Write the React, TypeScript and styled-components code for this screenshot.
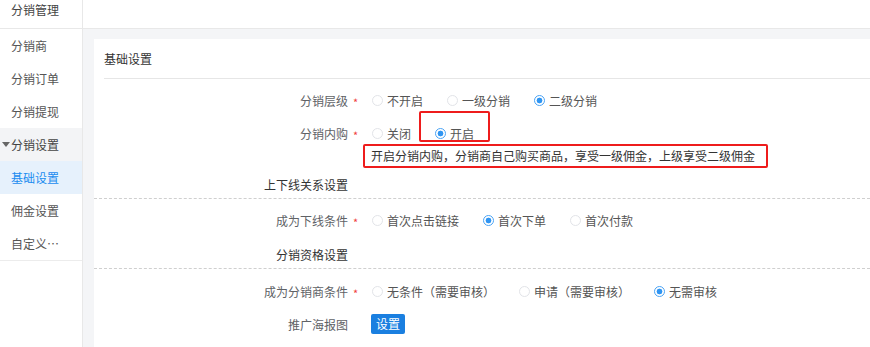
import * as React from 'react';
import styled, { createGlobalStyle, css } from 'styled-components';

const GlobalStyle = createGlobalStyle`
  html, body {
    margin: 0;
    padding: 0;
    background: #ffffff;
  }
  body {
    font-family: "Noto Sans CJK SC", "Noto Sans", sans-serif;
    font-size: 12px;
    color: #555;
  }
`;

// Layout
const Page = styled.div`
  display: flex;
  height: 347px;
  overflow: hidden;
`;

const Sidebar = styled.aside`
  width: 82px;
  flex-shrink: 0;
  border-right: 1px solid #e8e8e8;
  background: #fff;
`;

const SideHeader = styled.div`
  height: 28px;
  line-height: 19px;
  padding-left: 11px;
  color: #444;
  border-bottom: 1px solid #e8e8e8;
`;

const SideList = styled.ul`
  list-style: none;
  margin: 0;
  padding: 0;
  border-bottom: 1px solid #ececec;
`;

const SideItem = styled.li<{ $active?: boolean; $group?: boolean }>`
  display: flex;
  align-items: center;
  height: 33px;
  padding-left: 11px;
  color: #555;
  white-space: nowrap;
  ${(p) =>
    p.$group &&
    css`
      padding-left: 2px;
      background: #f3f4f6;
      color: #444;
    `}
  ${(p) =>
    p.$active &&
    css`
      background: #e6f1fc;
      color: #1a8cf0;
    `}
`;

const Caret = styled.span`
  width: 0;
  height: 0;
  border-left: 4px solid transparent;
  border-right: 4px solid transparent;
  border-top: 5px solid #666;
  margin-right: 1px;
`;

const Main = styled.main`
  flex: 1;
  display: flex;
  flex-direction: column;
  min-width: 0;
`;

const TopBar = styled.div`
  height: 28px;
  background: #fff;
  border-bottom: 1px solid #e8e8e8;
`;

const Content = styled.div`
  flex: 1;
  background: #f4f5f7;
  padding: 10px 0 0 11px;
`;

const Card = styled.section`
  background: #fff;
  height: 100%;
`;

const CardTitle = styled.div`
  margin-left: 10px;
  height: 39px;
  line-height: 39px;
  color: #333;
  border-bottom: 1px solid #e6e6e6;
`;

const Form = styled.div`
  padding-top: 11px;
`;

const Row = styled.div<{ $top?: number }>`
  display: flex;
  align-items: center;
  height: 20px;
  margin-top: ${(p) => p.$top ?? 0}px;
`;

const Label = styled.div`
  width: 268px;
  flex-shrink: 0;
  display: flex;
  justify-content: flex-end;
  align-items: center;
  color: #606266;
`;

const Star = styled.span`
  width: 14px;
  padding: 3px 0 0 5px;
  box-sizing: border-box;
  color: #f04040;
  font-size: 11px;
`;

const Group = styled.div`
  display: flex;
  align-items: center;
  padding-left: 10px;
`;

const Option = styled.label<{ $mark?: boolean }>`
  position: relative;
  display: flex;
  align-items: center;
  margin-right: 24px;
  color: #555;
  white-space: nowrap;
  ${(p) =>
    p.$mark &&
    css`
      &::after {
        content: '';
        position: absolute;
        left: -16px;
        top: -14px;
        width: 67px;
        height: 27px;
        border: 2px solid #ee1c1c;
        border-radius: 2px;
      }
    `}
`;

const Circle = styled.span<{ $on?: boolean }>`
  width: 11px;
  height: 11px;
  box-sizing: border-box;
  border-radius: 50%;
  margin-right: 4px;
  border: 1px solid ${(p) => (p.$on ? '#4aa3f5' : '#e2e4e8')};
  background: ${(p) =>
    p.$on ? 'radial-gradient(circle, #2f95f2 0 2.6px, #fff 3.2px)' : '#fff'};
`;

const Tip = styled.div`
  margin-left: 269px;
  margin-top: 1px;
  width: fit-content;
  height: 24px;
  box-sizing: border-box;
  line-height: 20px;
  padding: 0 11px 0 6px;
  border: 2px solid #ee1c1c;
  border-radius: 2px;
  color: #333;
  white-space: nowrap;
`;

const SectionTitle = styled.div<{ $top: number }>`
  margin-top: ${(p) => p.$top}px;
  height: 20px;
  line-height: 20px;
  padding-bottom: 3px;
  border-bottom: 1px dashed #cfcfcf;
  color: #333;
`;

const SectionText = styled.div`
  width: 268px;
  box-sizing: border-box;
  padding-right: 14px;
  text-align: right;
`;

const Button = styled.button`
  margin-left: 9px;
  height: 20px;
  padding: 0 5px;
  border: none;
  border-radius: 2px;
  background: #1a7fe0;
  color: #fff;
  font-family: inherit;
  font-size: 12px;
  line-height: 20px;
`;

type Opt = { text: string; on?: boolean; mark?: boolean };

function Radios({ items }: { items: Opt[] }) {
  return (
    <Group>
      {items.map((o) => (
        <Option key={o.text} $mark={o.mark}>
          <Circle $on={o.on} />
          {o.text}
        </Option>
      ))}
    </Group>
  );
}

function FieldLabel({ text, required }: { text: string; required?: boolean }) {
  return (
    <Label>
      {text}
      <Star>{required ? '*' : ''}</Star>
    </Label>
  );
}

export default function App() {
  return (
    <>
      <GlobalStyle />
      <Page>
        <Sidebar>
          <SideHeader>分销管理</SideHeader>
          <SideList>
            <SideItem>分销商</SideItem>
            <SideItem>分销订单</SideItem>
            <SideItem>分销提现</SideItem>
            <SideItem $group>
              <Caret />
              分销设置
            </SideItem>
            <SideItem $active>基础设置</SideItem>
            <SideItem>佣金设置</SideItem>
            <SideItem>自定义…</SideItem>
          </SideList>
        </Sidebar>
        <Main>
          <TopBar />
          <Content>
            <Card>
              <CardTitle>基础设置</CardTitle>
              <Form>
                <Row>
                  <FieldLabel text="分销层级" required />
                  <Radios
                    items={[
                      { text: '不开启' },
                      { text: '一级分销' },
                      { text: '二级分销', on: true },
                    ]}
                  />
                </Row>
                <Row $top={13}>
                  <FieldLabel text="分销内购" required />
                  <Radios items={[{ text: '关闭' }, { text: '开启', on: true, mark: true }]} />
                </Row>
                <Tip>开启分销内购，分销商自己购买商品，享受一级佣金，上级享受二级佣金</Tip>

                <SectionTitle $top={7}>
                  <SectionText>上下线关系设置</SectionText>
                </SectionTitle>
                <Row $top={11}>
                  <FieldLabel text="成为下线条件" required />
                  <Radios
                    items={[
                      { text: '首次点击链接' },
                      { text: '首次下单', on: true },
                      { text: '首次付款' },
                    ]}
                  />
                </Row>

                <SectionTitle $top={15}>
                  <SectionText>分销资格设置</SectionText>
                </SectionTitle>
                <Row $top={12}>
                  <FieldLabel text="成为分销商条件" required />
                  <Radios
                    items={[
                      { text: '无条件（需要审核）' },
                      { text: '申请（需要审核）' },
                      { text: '无需审核', on: true },
                    ]}
                  />
                </Row>
                <Row $top={13}>
                  <FieldLabel text="推广海报图" />
                  <Button>设置</Button>
                </Row>
              </Form>
            </Card>
          </Content>
        </Main>
      </Page>
    </>
  );
}
